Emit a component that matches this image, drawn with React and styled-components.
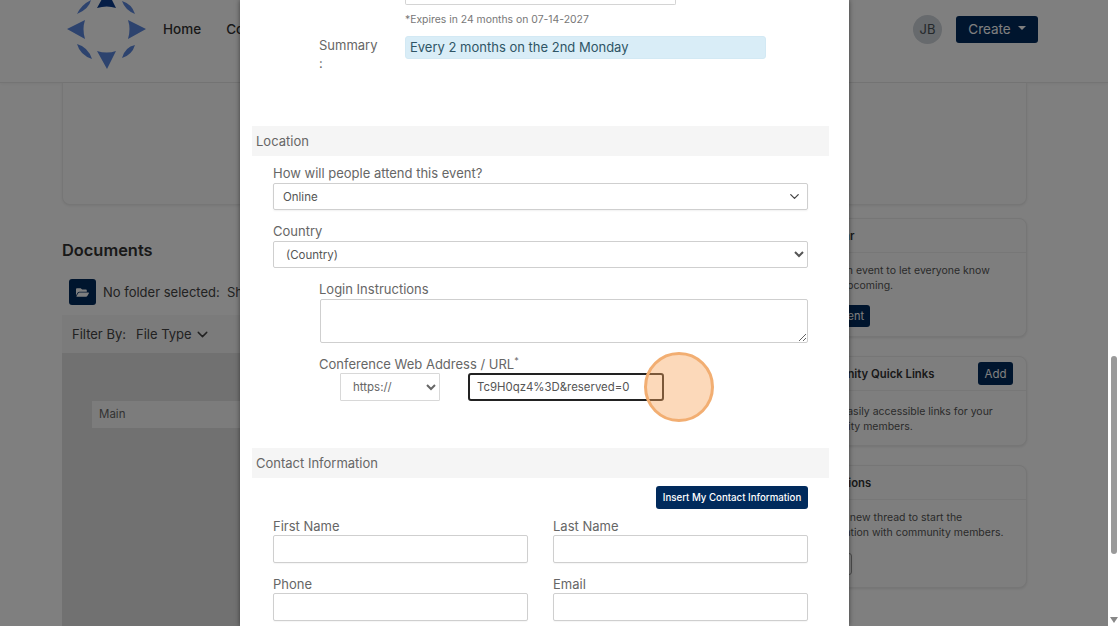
import React from "react";
import styled, { createGlobalStyle } from "styled-components";
import { ChevronDown } from "lucide-react";
import { FaFolderOpen } from "react-icons/fa";

const GlobalStyle = createGlobalStyle`
  html, body {
    margin: 0;
    height: 100%;
    overflow: hidden;
    background: #fff;
    font-family: Inter, "Liberation Sans", sans-serif;
  }
  * { box-sizing: border-box; }
`;

function Logo() {
  return (
    <LogoSvg viewBox="66 0 82 83">
      <path d="M97 8 L107 -10 L116 8 Q107 5 97 8 Z" fill="#0a3a8c" />
      <path d="M67 29 L85 20 Q82 29 85 39 Z" fill="#5b86dc" />
      <path d="M146 29 L128 20 Q131 29 128 39 Z" fill="#5b86dc" />
      <path d="M107 69 L97 51 Q107 54 116 51 Z" fill="#5b86dc" />
      <path d="M77 14 Q81 5 91 0 Q89 9 77 14 Z" fill="#5b86dc" />
      <path d="M122 1 Q132 4 135 14 Q125 10 122 1 Z" fill="#5b86dc" />
      <path d="M77 44 Q88 47 92 59 Q80 55 77 44 Z" fill="#5b86dc" />
      <path d="M122 58 Q132 55 135 45 Q125 47 122 58 Z" fill="#5b86dc" />
    </LogoSvg>
  );
}

function SideCard({ title, action, lines, button, outlined, height, buttonWidth, bodyTop = 10, buttonTop = 13 }) {
  return (
    <Card $height={height}>
      <CardHead>
        <CardTitle>{title}</CardTitle>
        {action && <SmallButton>{action}</SmallButton>}
      </CardHead>
      <CardBody $top={bodyTop}>
        {lines.map((line) => (
          <CardText key={line}>{line}</CardText>
        ))}
        {button && (
          <CardButton $outlined={outlined} $width={buttonWidth} $top={buttonTop}>
            {button}
          </CardButton>
        )}
      </CardBody>
    </Card>
  );
}

function App() {
  return (
    <Shell>
      <GlobalStyle />
      <Viewport>
        <Header>
          <Logo />
          <Nav>
            <NavLink>Home</NavLink>
            <NavLink>Community</NavLink>
          </Nav>
          <HeaderRight>
            <Avatar>JB</Avatar>
            <CreateButton>
              Create <Caret />
            </CreateButton>
          </HeaderRight>
        </Header>
        <Content>
          <TopCard />
          <Columns>
            <MainColumn>
              <SectionTitle>Documents</SectionTitle>
              <FolderRow>
                <FolderButton>
                  <FaFolderOpen size={13} />
                </FolderButton>
                <FolderText>No folder selected:&nbsp; Show all</FolderText>
              </FolderRow>
              <FilterBar>
                <span>Filter By:</span>
                <FilterType>
                  File Type <ChevronDown size={17} />
                </FilterType>
              </FilterBar>
              <DocPanel>
                <FolderItem>Main</FolderItem>
              </DocPanel>
            </MainColumn>
            <Sidebar>
              <SideCard
                title="Calendar"
                height={119}
                lines={["Create an event to let everyone know", "what's upcoming."]}
                button="Add Event"
                buttonWidth={65}
                buttonTop={12}
              />
              <SideCard
                title="Community Quick Links"
                height={90}
                action="Add"
                bodyTop={13}
                lines={["Create easily accessible links for your", "community members."]}
              />
              <SideCard
                title="Discussions"
                height={123}
                lines={["Create a new thread to start the", "conversation with community members."]}
                button="Post"
                buttonWidth={47}
                outlined
              />
            </Sidebar>
          </Columns>
        </Content>

        <Backdrop>
          <Modal>
            <ClippedInput />
            <HelpText>*Expires in 24 months on 07-14-2027</HelpText>
            <SummaryRow>
              <SummaryLabel>Summary :</SummaryLabel>
              <SummaryValue>Every 2 months on the 2nd Monday</SummaryValue>
            </SummaryRow>

            <Band $top={54}>Location</Band>
            <FieldBlock>
              <FieldLabel $top={9}>How will people attend this event?</FieldLabel>
              <CustomSelect>
                Online
                <ChevronDown size={15} color="#444" />
              </CustomSelect>
              <FieldLabel $top={13}>Country</FieldLabel>
              <NativeSelect defaultValue="country">
                <option value="country">(Country)</option>
              </NativeSelect>
            </FieldBlock>
            <IndentedBlock>
              <FieldLabel $top={13}>Login Instructions</FieldLabel>
              <TextArea />
              <FieldLabel $top={13}>
                Conference Web Address / URL<Required>*</Required>
              </FieldLabel>
              <UrlRow>
                <UrlSelect defaultValue="https">
                  <option value="https">https://</option>
                </UrlSelect>
                <UrlInput readOnly value="Tc9H0qz4%3D&reserved=0" />
              </UrlRow>
            </IndentedBlock>

            <Band $top={47}>Contact Information</Band>
            <ButtonRow>
              <InsertButton>Insert My Contact Information</InsertButton>
            </ButtonRow>
            <ContactGrid>
              <div>
                <FieldLabel $top={9}>First Name</FieldLabel>
                <TextInput />
              </div>
              <div>
                <FieldLabel $top={9}>Last Name</FieldLabel>
                <TextInput />
              </div>
              <div>
                <FieldLabel $top={13}>Phone</FieldLabel>
                <TextInput />
              </div>
              <div>
                <FieldLabel $top={13}>Email</FieldLabel>
                <TextInput />
              </div>
            </ContactGrid>
          </Modal>
          <Highlight />
        </Backdrop>
      </Viewport>
      <ScrollTrack>
        <ScrollThumb />
        <ScrollArrow />
      </ScrollTrack>
    </Shell>
  );
}

const Shell = styled.div`
  display: flex;
  width: 1120px;
  height: 626px;
  overflow: hidden;
`;

const Viewport = styled.div`
  position: relative;
  width: 1108px;
  height: 626px;
  overflow: hidden;
  background: #fff;
`;

const Header = styled.header`
  display: flex;
  align-items: center;
  height: 83px;
  padding: 0 70px 24px 66px;
  background: #fff;
  border-bottom: 1px solid #e9e9e9;
  box-shadow: 0 1px 3px rgba(0, 0, 0, 0.05);
`;

const LogoSvg = styled.svg`
  width: 82px;
  height: 83px;
  margin-bottom: -24px;
  flex: none;
`;

const Nav = styled.nav`
  display: flex;
  gap: 25px;
  margin-left: 15px;
`;

const NavLink = styled.a`
  font-size: 13.5px;
  font-weight: 500;
  color: #333;
`;

const HeaderRight = styled.div`
  display: flex;
  align-items: center;
  gap: 14px;
  margin-left: auto;
`;

const Avatar = styled.div`
  display: flex;
  align-items: center;
  justify-content: center;
  width: 29px;
  height: 29px;
  border-radius: 50%;
  background: #ced4da;
  color: #495057;
  font-size: 13px;
`;

const CreateButton = styled.button`
  display: flex;
  align-items: center;
  justify-content: center;
  gap: 7px;
  width: 82px;
  height: 27px;
  border: 0;
  border-radius: 3px;
  background: #002a5c;
  color: #fff;
  font: 13.5px Inter, sans-serif;
`;

const Caret = styled.i`
  width: 0;
  height: 0;
  margin-bottom: 3px;
  border-left: 4px solid transparent;
  border-right: 4px solid transparent;
  border-top: 4px solid #fff;
`;

const Content = styled.main`
  padding: 0 81px 0 62px;
`;

const TopCard = styled.div`
  height: 122px;
  border: 1px solid #ececec;
  border-top: 0;
  border-radius: 0 0 8px 8px;
  background: #fdfdfd;
  box-shadow: 0 1px 3px rgba(0, 0, 0, 0.08);
`;

const Columns = styled.div`
  display: grid;
  grid-template-columns: 1fr 235px;
  gap: 20px;
`;

const MainColumn = styled.section`
  padding-top: 35px;
`;

const SectionTitle = styled.h2`
  margin: 0;
  font-size: 16.4px;
  line-height: 20px;
  font-weight: 600;
  color: #333;
`;

const FolderRow = styled.div`
  display: flex;
  align-items: center;
  gap: 7px;
  height: 26px;
  margin: 19px 0 0 7px;
`;

const FolderButton = styled.div`
  display: flex;
  align-items: center;
  justify-content: center;
  width: 27px;
  height: 26px;
  border-radius: 3px;
  background: #002a5c;
  color: #fff;
`;

const FolderText = styled.span`
  padding-bottom: 1px;
  font-size: 13px;
  color: #444;
  white-space: nowrap;
`;

const FilterBar = styled.div`
  display: flex;
  align-items: center;
  gap: 10px;
  height: 38px;
  margin-top: 10px;
  padding-left: 10px;
  background: #f6f6f6;
  font-size: 13px;
  color: #444;
`;

const FilterType = styled.span`
  display: flex;
  align-items: center;
  gap: 2px;
`;

const DocPanel = styled.div`
  height: 280px;
  padding: 48px 0 0 30px;
  background: #e2e2e2;
`;

const FolderItem = styled.div`
  height: 27px;
  padding-left: 7px;
  background: #f8f8f8;
  font-size: 11.5px;
  line-height: 26px;
  color: #666;
`;

const Sidebar = styled.aside`
  display: flex;
  flex-direction: column;
  gap: 19px;
  padding-top: 13px;
`;

const Card = styled.div`
  height: ${(p) => p.$height}px;
  border: 1px solid #ececec;
  border-radius: 8px;
  background: #fdfdfd;
  box-shadow: 0 1px 3px rgba(0, 0, 0, 0.1);
`;

const CardHead = styled.div`
  display: flex;
  align-items: center;
  justify-content: space-between;
  height: 34px;
  padding: 0 13px 0 12px;
  border-bottom: 1px solid #efefef;
`;

const CardTitle = styled.h3`
  margin: 0;
  font-size: 11.3px;
  font-weight: 600;
  color: #333;
`;

const SmallButton = styled.button`
  width: 35px;
  height: 23px;
  border: 0;
  border-radius: 3px;
  background: #002a5c;
  color: #fff;
  font: 11.5px Inter, sans-serif;
`;

const CardBody = styled.div`
  padding: ${(p) => p.$top}px 13px 10px 12px;
`;

const CardText = styled.p`
  margin: 0;
  font-size: 10.5px;
  line-height: 15px;
  color: #555;
  white-space: nowrap;
`;

const CardButton = styled.button`
  display: block;
  width: ${(p) => p.$width}px;
  height: 22px;
  margin-top: ${(p) => p.$top}px;
  padding: 0;
  border: ${(p) => (p.$outlined ? "1px solid #999" : "0")};
  border-radius: 3px;
  background: ${(p) => (p.$outlined ? "transparent" : "#002a5c")};
  color: ${(p) => (p.$outlined ? "#333" : "#fff")};
  font: 11px Inter, sans-serif;
  text-align: center;
`;

const Backdrop = styled.div`
  position: absolute;
  inset: 0;
  background: rgba(0, 0, 0, 0.5);
`;

const Modal = styled.div`
  width: 609px;
  height: 626px;
  margin-left: 240px;
  padding: 0 20px 0 12px;
  overflow: hidden;
  background: #fff;
  box-shadow: 0 0 5px rgba(0, 0, 0, 0.5);
  color: #666;
`;

const ClippedInput = styled.div`
  width: 271px;
  height: 5px;
  margin-left: 153px;
  border: 1px solid #d4d4d4;
  border-top: 0;
  border-radius: 0 0 2px 2px;
`;

const HelpText = styled.div`
  margin: 8px 0 0 153px;
  font-size: 10.4px;
  line-height: 14px;
  color: #777;
`;

const SummaryRow = styled.div`
  display: flex;
  height: 36px;
  margin-top: 9px;
  padding-left: 67px;
`;

const SummaryLabel = styled.div`
  width: 86px;
  padding-right: 24px;
  font-size: 13px;
  line-height: 18px;
  color: #666;
`;

const SummaryValue = styled.div`
  width: 361px;
  height: 23px;
  padding-left: 4px;
  border: 1px solid #d3e9f4;
  border-radius: 3px;
  background: #d9edf7;
  font-size: 13px;
  line-height: 21px;
  color: #2f5566;
`;

const Band = styled.div`
  height: 30px;
  margin-top: ${(p) => p.$top}px;
  padding-left: 4px;
  background: #f5f5f5;
  font-size: 13px;
  line-height: 30px;
  color: #666;
`;

const FieldBlock = styled.div`
  padding: 0 21px;
`;

const IndentedBlock = styled.div`
  padding: 0 21px 0 67px;
`;

const FieldLabel = styled.label`
  display: block;
  margin-top: ${(p) => p.$top}px;
  font-size: 13px;
  line-height: 17px;
  color: #666;
`;

const Required = styled.sup`
  font-size: 9px;
  line-height: 0;
`;

const CustomSelect = styled.div`
  display: flex;
  align-items: center;
  justify-content: space-between;
  height: 27px;
  margin-top: 1px;
  padding: 0 5px 0 9px;
  border: 1px solid #cfcfcf;
  border-radius: 2px;
  box-shadow: 0 1px 2px rgba(0, 0, 0, 0.06);
  font-size: 11.5px;
  color: #555;
`;

const NativeSelect = styled.select`
  display: block;
  width: 100%;
  height: 27px;
  margin-top: 1px;
  padding-left: 8px;
  border: 1px solid #cfcfcf;
  border-radius: 2px;
  background: #fff;
  font: 11.5px Inter, sans-serif;
  color: #555;
`;

const TextArea = styled.textarea`
  display: block;
  width: 488px;
  height: 44px;
  margin: 1px 0 0 1px;
  border: 1px solid #cfcfcf;
  border-radius: 2px;
  background: #fff;
`;

const UrlRow = styled.div`
  display: flex;
  gap: 28px;
  margin-left: 21px;
`;

const UrlSelect = styled.select`
  width: 100px;
  height: 28px;
  padding-left: 8px;
  border: 1px solid #d8d8d8;
  border-radius: 1px;
  background: #fff;
  font: 11.5px Inter, sans-serif;
  color: #666;
`;

const UrlInput = styled.input`
  width: 196px;
  height: 28px;
  padding: 0 7px;
  border: 2px solid #222;
  border-radius: 3px;
  outline: none;
  font: 11.4px Inter, sans-serif;
  color: #555;
`;

const ButtonRow = styled.div`
  display: flex;
  justify-content: flex-end;
  margin-top: 8px;
  padding-right: 21px;
`;

const InsertButton = styled.button`
  width: 152px;
  height: 23px;
  padding: 0;
  border: 0;
  border-radius: 3px;
  background: #002a5c;
  color: #fff;
  font: 500 9.7px Inter, sans-serif;
`;

const ContactGrid = styled.div`
  display: grid;
  grid-template-columns: 255px 255px;
  column-gap: 25px;
  padding: 0 21px;
`;

const TextInput = styled.input`
  display: block;
  width: 100%;
  height: 28px;
  margin: 0;
  border: 1px solid #cfcfcf;
  border-radius: 2px;
  box-shadow: 0 1px 1px rgba(0, 0, 0, 0.04);
`;

const Highlight = styled.div`
  position: absolute;
  left: 644px;
  top: 352px;
  width: 70px;
  height: 70px;
  border: 3px solid #f2ae72;
  border-radius: 50%;
  background: rgba(249, 165, 90, 0.42);
`;

const ScrollTrack = styled.div`
  display: flex;
  flex-direction: column;
  align-items: center;
  width: 12px;
  height: 626px;
  padding-top: 356px;
  background: #fff;
`;

const ScrollThumb = styled.div`
  width: 6px;
  height: 198px;
  border-radius: 3px;
  background: #9a9a9a;
`;

const ScrollArrow = styled.i`
  width: 0;
  height: 0;
  margin-top: auto;
  margin-bottom: 3px;
  border-left: 4px solid transparent;
  border-right: 4px solid transparent;
  border-top: 6px solid #888;
`;

export default App;
